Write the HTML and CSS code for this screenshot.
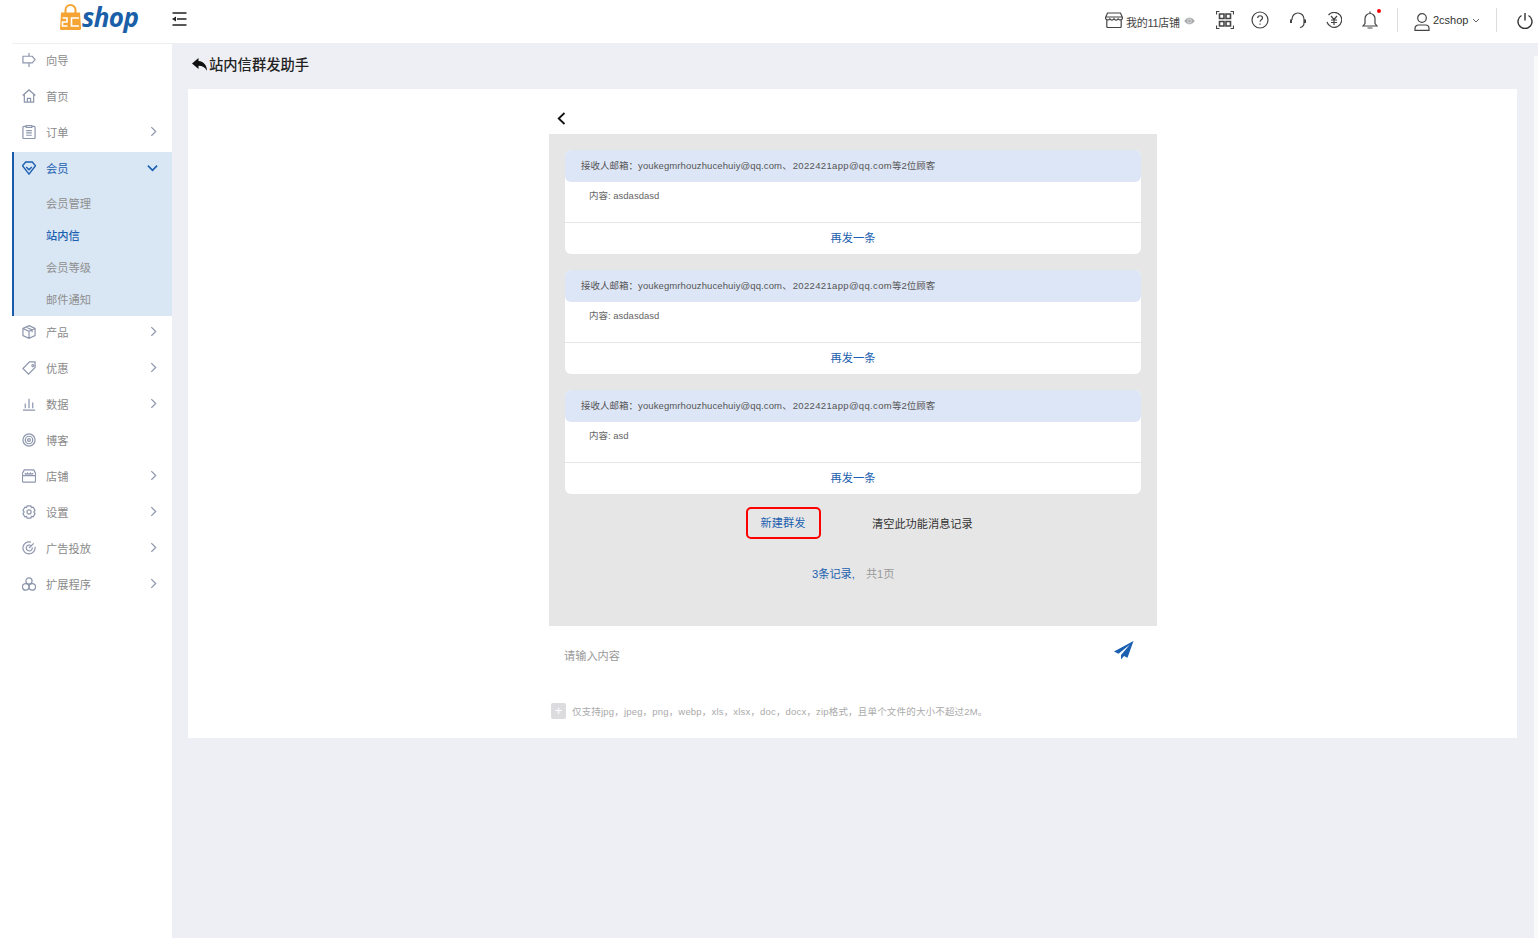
FILE: index.html
```html
<!DOCTYPE html>
<html lang="zh-CN">
<head>
<meta charset="utf-8">
<title>站内信群发助手</title>
<link rel="stylesheet" href="styles.css">
</head>
<body>
<header class="topbar">
  <div class="logo">
    <svg class="logo-bag" viewBox="0 0 21 26"><path class="bag-handle" d="M5.500 9V6a5 5 0 0 1 10 0v3"/><path class="bag-body" d="M1 8.500h19l1 16a1.500 1.500 0 0 1-1.500 1.500h-18A1.500 1.500 0 0 1 0 24.500z"/><path class="bag-mark" d="M2.500 14h4.500v4h-4.500v4h5M19 14h-7.500v8h7.500"/></svg>
    <span class="logo-text">shop</span>
  </div>
  <svg class="collapse" viewBox="0 0 16 14"><path d="M1.500 1h14M6 7h9.500M1.500 13h14"/><path class="fill" d="M1 7l4-2.500v5z"/></svg>
  <div class="tools">
    <svg class="tool store" viewBox="0 0 18 16"><path d="M2.500 1h13l2 4.500c0 3-3 3-4.300 1.300-1 1.700-3.200 1.700-4.200 0-1 1.700-3.200 1.700-4.200 0C3.500 8.500.5 8.500.5 5.500zM1 5h16M1.800 8v6.500a1 1 0 0 0 1 1h12.400a1 1 0 0 0 1-1V8"/></svg>
    <span class="shop-name">我的11店铺</span>
    <svg class="eye" viewBox="0 0 12 8"><path d="M0 4c3-5 9-5 12 0-3 5-9 5-12 0z"/><circle cx="6" cy="4" r="2"/></svg>
    <svg class="tool qr" viewBox="0 0 18 18"><path d="M.5 3.500v-3h3M14.500.5h3v3M17.500 14.500v3h-3M3.500 17.500h-3v-3"/><path class="thick" d="M3.500 3h4.500v4.500h-4.500zM10 3h4.500v4.500h-4.500zM3.500 10.500h4.500v4.500h-4.500zM10 10.500h4.500v4.500h-4.500z"/></svg>
    <svg class="tool help" viewBox="0 0 18 18"><circle cx="9" cy="9" r="8"/><path d="M6.700 7c0-3 4.800-3 4.800 0 0 1.800-2.400 1.800-2.400 3.700"/><path d="M9 12.500v1.200"/></svg>
    <svg class="tool headset" viewBox="0 0 16 17"><path d="M2 8V7a6 6 0 0 1 12 0v4c0 2.500-1.500 4-4 4.500"/><path class="thick ear" d="M1 7.500v3.500M15 7.500v3.500"/></svg>
    <svg class="tool yen" viewBox="0 0 16 16"><path d="M2.500 3a7.500 7.500 0 1 1-1.500 7M5 4l3 3.500L11 4M5 8h6M5 10.500h6M8 7.500v5.500"/></svg>
    <span class="bell-wrap">
      <svg class="tool bell" viewBox="0 0 16 18"><path d="M8 2.500a5 5 0 0 0-5 5v5L1 15h14l-2-2.500v-5a5 5 0 0 0-5-5zM8 .5v2M5.500 17h5"/></svg>
      <i class="dot"></i>
    </span>
    <i class="vline first"></i>
    <svg class="tool user" viewBox="0 0 16 18"><circle cx="8" cy="5" r="4.300"/><path d="M1 17.300v-1.800c0-2 1.500-3.500 3.500-3.500h7c2 0 3.500 1.500 3.500 3.500v1.800z"/></svg>
    <span class="username">2cshop</span>
    <svg class="caret" viewBox="0 0 8 5"><path d="M1 1l3 3 3-3"/></svg>
    <i class="vline second"></i>
    <svg class="tool power" viewBox="0 0 16 17"><path d="M4.500 3.500a7 7 0 1 0 7 0M8 1v7.500"/></svg>
  </div>
</header>

<div class="layout">
  <nav class="sidebar">
    <a class="row"><svg class="ico" viewBox="0 0 15 15"><path d="M7.500 0v3M7.500 11v4M1 3.500h10l3 3.500-3 3.500H1z"/></svg><span>向导</span></a>
    <a class="row"><svg class="ico" viewBox="0 0 15 15"><path d="M.7 7L7.500 1l6.800 6M2.500 6v8h10V6M5.800 14v-4h3.400v4"/></svg><span>首页</span></a>
    <a class="row"><svg class="ico" viewBox="0 0 15 15"><path d="M4 1.500H2a1 1 0 0 0-1 1v11a1 1 0 0 0 1 1h11a1 1 0 0 0 1-1v-11a1 1 0 0 0-1-1h-2M4.500.5h6v2h-6zM4.500 6h6M4.500 8.500h6M4.500 11h6"/></svg><span>订单</span><svg class="chev" viewBox="0 0 8 12"><path d="M1.500 1l5 5-5 5"/></svg></a>
    <div class="group">
      <a class="row open"><svg class="ico" viewBox="0 0 15 15"><path d="M4 1h7l3.500 4-7 9L.5 5zM4.500 6.500l3 3 3-3"/></svg><span>会员</span><svg class="chev down" viewBox="0 0 12 8"><path d="M1 1.500l5 5 5-5"/></svg></a>
      <a class="sub">会员管理</a>
      <a class="sub current">站内信</a>
      <a class="sub">会员等级</a>
      <a class="sub">邮件通知</a>
    </div>
    <a class="row"><svg class="ico" viewBox="0 0 15 15"><path d="M7.500.7l6.500 3v7.600l-6.500 3-6.500-3V3.700zM1 3.700l6.500 3 6.500-3M7.500 6.700v7.600M4.300 2.200l6.500 3v2.500"/></svg><span>产品</span><svg class="chev" viewBox="0 0 8 12"><path d="M1.500 1l5 5-5 5"/></svg></a>
    <a class="row"><svg class="ico" viewBox="0 0 15 15"><path d="M8 1h6v6l-7 7-6-6zM10.500 5a1 1 0 1 0 0-.1"/></svg><span>优惠</span><svg class="chev" viewBox="0 0 8 12"><path d="M1.500 1l5 5-5 5"/></svg></a>
    <a class="row"><svg class="ico" viewBox="0 0 15 15"><path d="M1 14h13M3.500 12V7M7.500 12V2M11.500 12V6"/></svg><span>数据</span><svg class="chev" viewBox="0 0 8 12"><path d="M1.500 1l5 5-5 5"/></svg></a>
    <a class="row"><svg class="ico" viewBox="0 0 15 15"><circle cx="7.500" cy="7.500" r="6.500"/><circle cx="7.500" cy="7.500" r="4"/><circle cx="7.500" cy="7.500" r="1.500"/></svg><span>博客</span></a>
    <a class="row"><svg class="ico" viewBox="0 0 15 15"><path d="M2.500 1h10l2 3.500V13a1 1 0 0 1-1 1h-12a1 1 0 0 1-1-1V4.500zM.5 7h14M3 4.500c1 1.500 2 1.500 3 0 1 1.500 2 1.500 3 0 1 1.500 2 1.500 3 0"/></svg><span>店铺</span><svg class="chev" viewBox="0 0 8 12"><path d="M1.500 1l5 5-5 5"/></svg></a>
    <a class="row"><svg class="ico" viewBox="0 0 15 15"><path d="M5.500 1h4l.6 1.800 1.900-.4 2 3.400-1.300 1.700 1.300 1.700-2 3.400-1.900-.4L9.500 14h-4l-.6-1.800-1.900.4-2-3.400 1.300-1.700-1.300-1.700 2-3.400 1.900.4z"/><circle cx="7.500" cy="7.500" r="2.200"/></svg><span>设置</span><svg class="chev" viewBox="0 0 8 12"><path d="M1.500 1l5 5-5 5"/></svg></a>
    <a class="row"><svg class="ico" viewBox="0 0 15 15"><path d="M9.500 1.200a6.500 6.500 0 1 0 4.400 5M9.500 4.800a3.200 3.200 0 1 0 1.400 2M7.500 7.500l5-5"/></svg><span>广告投放</span><svg class="chev" viewBox="0 0 8 12"><path d="M1.500 1l5 5-5 5"/></svg></a>
    <a class="row"><svg class="ico" viewBox="0 0 15 15"><circle cx="7.500" cy="4.300" r="3.300"/><circle cx="4" cy="10.500" r="3.500"/><circle cx="11" cy="10.500" r="3.500"/></svg><span>扩展程序</span><svg class="chev" viewBox="0 0 8 12"><path d="M1.500 1l5 5-5 5"/></svg></a>
  </nav>

  <main class="content">
    <h1 class="page-title"><svg class="reply" viewBox="0 0 16 13"><path d="M6.500 0L0 5.500 6.500 11V7.700c4 0 6.500 1.500 8.500 5 0-5-3-9.200-8.500-9.700z"/></svg>站内信群发助手</h1>
    <section class="panel">
      <div class="chat">
        <svg class="back" viewBox="0 0 9 13"><path d="M7.500 1L1.700 6.500l5.800 5.500"/></svg>
        <div class="history">
          <article class="msg">
            <div class="msg-head">接收人邮箱：<span class="mail1">youkegmrhouzhucehuiy@qq.com</span>、<span class="mail2">2022421app@qq.com</span>等2位顾客</div>
            <div class="msg-body">内容: asdasdasd</div>
            <div class="msg-foot">再发一条</div>
          </article>
          <article class="msg">
            <div class="msg-head">接收人邮箱：<span class="mail1">youkegmrhouzhucehuiy@qq.com</span>、<span class="mail2">2022421app@qq.com</span>等2位顾客</div>
            <div class="msg-body">内容: asdasdasd</div>
            <div class="msg-foot">再发一条</div>
          </article>
          <article class="msg">
            <div class="msg-head">接收人邮箱：<span class="mail1">youkegmrhouzhucehuiy@qq.com</span>、<span class="mail2">2022421app@qq.com</span>等2位顾客</div>
            <div class="msg-body">内容: asd</div>
            <div class="msg-foot">再发一条</div>
          </article>
          <div class="actions">
            <span class="btn-new">新建群发</span>
            <span class="btn-clear">清空此功能消息记录</span>
          </div>
          <div class="pager"><span class="count">3条记录,</span><span class="pages">共1页</span></div>
        </div>
        <div class="composer">
          <span class="placeholder">请输入内容</span>
          <svg class="send" viewBox="0 0 20 19"><path d="M19.500 0L0 10.500l4.500 2.300L16 3.500 7 14v4.500l3-3.500 3.500 1.800z"/></svg>
        </div>
        <div class="upload">
          <span class="plus">+</span>
          <span class="hint">仅支持jpg，jpeg，png，webp，xls，xlsx，doc，docx，zip格式，且单个文件的大小不超过2M。</span>
        </div>
      </div>
    </section>
  </main>
</div>
<div class="scroll-strip"></div>
</body>
</html>
```
FILE: styles.css
```css
* { box-sizing: border-box; }
html, body { margin: 0; height: 100%; }
body {
  font-family: "Liberation Sans", "Noto Sans CJK SC", sans-serif;
  background: #fff;
  color: #333;
  overflow: hidden;
  position: relative;
}
svg { display: block; fill: none; stroke: currentColor; flex: none; }

.topbar {
  height: 43px;
  background: #fff;
  display: flex;
  align-items: center;
  padding-left: 60px;
}
.logo { display: flex; align-items: center; width: 111px; height: 43px; }
.logo-bag { width: 21px; height: 26px; stroke: none; margin-top: -9px; }
.bag-handle { stroke: #f5a433; stroke-width: 2; }
.bag-body { fill: #f5a433; }
.bag-mark { stroke: #fff; stroke-width: 1.600; }
.logo-text {
  font-family: "Open Sans", sans-serif;
  font-style: italic;
  font-weight: 700;
  font-size: 26px;
  line-height: 30px;
  color: #1a5fa8;
  letter-spacing: -0.6px;
  margin: -10px 0 0 1px;
}
.collapse { width: 16px; height: 14px; margin-top: -6px; color: #222; stroke-width: 1.500; }
.collapse .fill { fill: #222; stroke: none; }

.tools { margin-left: auto; display: flex; align-items: center; color: #444; height: 43px; padding-bottom: 3px; }
.tool { stroke-width: 1.200; }
.thick { stroke-width: 1.600; }
.ear { stroke-width: 2; }
.store { width: 18px; height: 16px; }
.shop-name { font-size: 11px; letter-spacing: -.3px; margin: 4px 0 0 3px; width: 53px; white-space: nowrap; color: #444; }
.eye { width: 11px; height: 8px; margin: 2px 0 0 5px; fill: #a8aaae; stroke: #fff; stroke-width: .6; }
.qr { width: 18px; height: 18px; margin-left: 21px; }
.help { width: 18px; height: 18px; margin-left: 17px; }
.headset { width: 16px; height: 17px; margin-left: 21px; }
.yen { width: 16px; height: 16px; margin-left: 20px; }
.bell-wrap { position: relative; margin-left: 20px; }
.bell { width: 16px; height: 18px; }
.dot { position: absolute; top: -2px; right: -3px; width: 4px; height: 4px; border-radius: 50%; background: #f00; }
.vline { width: 1px; height: 24px; background: #ddd; }
.vline.first { margin-left: 19px; }
.user { width: 16px; height: 18px; margin-left: 16px; margin-top: 3px; }
.username { font-size: 11px; margin-left: 3px; color: #333; width: 37px; }
.caret { width: 8px; height: 5px; margin-left: 2px; margin-top: 1px; color: #666; }
.vline.second { margin-left: 16px; }
.power { width: 16px; height: 17px; margin: 0 5px 0 20px; stroke-width: 1.400; color: #333; }

.layout { display: flex; height: calc(100% - 43px); padding-left: 12px; }
.sidebar {
  width: 160px;
  background: #fff;
  border-top: 1px solid #eeeff2;
  flex: none;
}
.row {
  display: flex;
  align-items: center;
  height: 36px;
  padding: 0 15px 5px 10px;
  font-size: 11.250px;
  color: #8a8a8a;
}
.ico { width: 14px; height: 14px; margin-right: 10px; color: #8d96ad; stroke-width: 1.300; }
.chev { width: 7px; height: 11px; margin-left: auto; color: #8d96ad; stroke-width: 1.400; }
.group { background: #d9e6f4; border-left: 2px solid #1a5cab; }
.row.open { padding-left: 8px; padding-right: 14px; color: #1a5fb0; }
.row.open .ico { color: #1a5fb0; stroke-width: 1.500; }
.chev.down { width: 11px; height: 8px; color: #1a5fb0; stroke-width: 1.800; }
.sub {
  display: block;
  height: 32px;
  line-height: 33px;
  padding-left: 32px;
  font-size: 11.250px;
  color: #8f8f8f;
}
.sub.current { color: #1a5fb0; font-weight: 500; }

.content { flex: 1; padding: 0 21px 0 16px; min-width: 0; background: #eeeff5; }
.page-title {
  display: flex;
  align-items: center;
  height: 46px;
  margin: 0;
  padding: 0 0 6px 4px;
  font-size: 14.300px;
  font-weight: 500;
  color: #222;
}
.reply { width: 16px; height: 13px; margin-right: 1px; fill: #111; stroke: none; margin-top: 2px; }
.panel { background: #fff; height: 649px; display: flex; justify-content: center; }
.chat { width: 608px; margin-left: 1px; display: flex; flex-direction: column; }
.back { width: 9px; height: 13px; margin: 23px 0 9px 8px; color: #111; stroke-width: 1.800; }
.history {
  background: #e6e6e6;
  height: 492px;
  padding: 16px 16px 0;
}
.msg {
  background: #fff;
  border-radius: 6px;
  height: 104px;
  margin-bottom: 16px;
  font-size: 9.500px;
  color: #666;
  display: flex;
  flex-direction: column;
}
.msg-head {
  height: 32px;
  line-height: 32px;
  padding-left: 16px;
  background: #dde6f6;
  border-radius: 6px;
  color: #555;
  white-space: nowrap;
}
.mail1 { letter-spacing: .11px; }
.mail2 { letter-spacing: .34px; margin-left: 1px; }
.msg-body { height: 41px; padding: 8px 0 0 24px; line-height: 12px; border-bottom: 1px solid #e6e6e6; }
.msg-foot { flex: 1; text-align: center; line-height: 31px; font-size: 11.250px; color: #1a5fb0; }
.actions {
  display: flex;
  align-items: center;
  height: 32px;
  margin-top: -3px;
  padding-left: 181px;
  font-size: 11.200px;
}
.btn-new {
  width: 75px;
  height: 32px;
  border: 2px solid #f00;
  border-radius: 5px;
  color: #1a5fb0;
  text-align: center;
  line-height: 29px;
  padding-right: 1px;
}
.btn-clear { margin-left: 51px; color: #333; margin-top: -1px; }
.pager { margin-top: 27px; padding-left: 247px; font-size: 11.200px; line-height: 16px; display: flex; }
.count { color: #1a5fb0; }
.pages { color: #999; margin-left: 11px; }
.composer {
  height: 60px;
  display: flex;
  justify-content: space-between;
  padding: 22px 23px 0 15px;
  font-size: 11.200px;
  color: #999;
}
.placeholder { line-height: 16px; }
.send { width: 20px; height: 19px; margin-top: -7px; fill: #1a5fb0; stroke: none; }
.upload {
  display: flex;
  align-items: center;
  gap: 6px;
  margin: 17px 0 0 2px;
  font-size: 9.500px;
  color: #aaa;
  white-space: nowrap;
}
.hint { letter-spacing: .18px; }
.plus {
  width: 15px;
  height: 16px;
  border-radius: 2px;
  background: #dcdcdf;
  color: #fff;
  font-size: 13px;
  line-height: 15px;
  text-align: center;
  flex: none;
}
.scroll-strip { position: absolute; top: 56px; right: 0; bottom: 0; width: 4px; background: #fafafa; }
```
